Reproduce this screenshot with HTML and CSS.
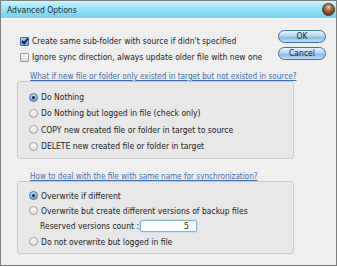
FILE: index.html
```html
<!DOCTYPE html>
<html lang="en">
<head>
    <meta charset="UTF-8">
    <title>Advanced Options</title>
    <link rel="stylesheet" href="styles.css">
</head>
<body>
<div class="window">
    <div class="title-bar">
        <span class="title">Advanced Options</span>
        <span class="close-button"></span>
    </div>

    <div class="content">
        <div class="top-row">
            <div class="top-options">
                <label class="row"><span class="checkbox checked"></span>Create same sub-folder with source if didn't specified</label>
                <label class="row"><span class="checkbox"></span>Ignore sync direction, always update older file with new one</label>
            </div>
            <div class="buttons">
                <button class="button">OK</button>
                <button class="button">Cancel</button>
            </div>
        </div>

        <div class="section-link first">What if new file or folder only existed in target but not existed in source?</div>
        <div class="group first-group">
            <label class="row radio-row"><span class="radio checked"></span>Do Nothing</label>
            <label class="row radio-row"><span class="radio"></span>Do Nothing but logged in file (check only)</label>
            <label class="row radio-row"><span class="radio"></span>COPY new created file or folder in target to source</label>
            <label class="row radio-row"><span class="radio"></span>DELETE new created file or folder in target</label>
        </div>

        <div class="section-link second">How to deal with the file with same name for synchronization?</div>
        <div class="group second-group">
            <label class="row radio-row"><span class="radio checked"></span>Overwrite if different</label>
            <label class="row radio-row"><span class="radio"></span>Overwrite but create different versions of backup files</label>
            <div class="row count-row">
                <span class="count-label">Reserved versions count :</span>
                <span class="count-input">5</span>
            </div>
            <label class="row radio-row"><span class="radio"></span>Do not overwrite but logged in file</label>
        </div>
    </div>
</div>
</body>
</html>
```

FILE: styles.css
```css
html, body {
    margin: 0;
    padding: 0;
    background: #ffffff;
}

.window {
    width: 335px;
    height: 264px;
    border: 1px solid #7d7d7d;
    background: repeating-linear-gradient(#f2f2f2 0, #f2f2f2 1px, #ececec 1px, #ececec 2px);
    font-family: "DejaVu Sans Condensed", "DejaVu Sans", sans-serif;
    font-size: 8.5px;
    color: #222;
    overflow: hidden;
}

.title-bar {
    height: 17px;
    display: flex;
    align-items: center;
    justify-content: space-between;
    padding: 0 1px 0 6px;
    background: linear-gradient(#cdf3fc, #93e3f6 50%, #6fd5ef);
    border-bottom: 1px solid #ffffff;
    position: relative;
}

.title-bar::after {
    content: "";
    position: absolute;
    left: 0;
    right: 16px;
    top: 13px;
    border-top: 1px dashed #7dcfea;
}

.title {
    color: #1e2a30;
    position: relative;
    z-index: 1;
}

.close-button {
    width: 11px;
    height: 11px;
    border-radius: 50%;
    border: 1px solid #4e3020;
    background: radial-gradient(circle at 50% 30%, #e9c9a6 0, #a86f44 35%, #6a3c20 75%);
    position: relative;
    z-index: 1;
}

.content {
    padding: 11px 10px 0 16px;
}

.top-row {
    display: flex;
    justify-content: space-between;
}

.top-options {
    padding: 3px 0 0 3px;
}

.row {
    display: flex;
    align-items: center;
    height: 16px;
    white-space: nowrap;
}

.checkbox {
    width: 7px;
    height: 7px;
    border: 1px solid #9a9a9a;
    border-radius: 1px;
    background: linear-gradient(#ffffff, #dcdcdc);
    margin-right: 3px;
    position: relative;
}

.checkbox.checked {
    border-color: #3c6ea8;
    background: linear-gradient(#b6d4f2, #6c9fd8);
}

.checkbox.checked::after {
    content: "";
    position: absolute;
    left: 2px;
    top: -1px;
    width: 2px;
    height: 5px;
    border: solid #0e2a55;
    border-width: 0 2px 2px 0;
    transform: rotate(40deg);
}

.buttons {
    display: flex;
    flex-direction: column;
    gap: 4px;
}

.button {
    width: 48px;
    height: 13px;
    padding: 0;
    border: 1px solid #3f6fa6;
    border-radius: 7px;
    background: linear-gradient(#e9f5ff, #a9d2f2 50%, #7fb8e6 55%, #bfe2fb);
    font-family: inherit;
    font-size: 8.5px;
    color: #1a1a1a;
    line-height: 11px;
}

.section-link {
    color: #3d6cae;
    text-decoration: underline;
    font-size: 8.1px;
    line-height: 9px;
    padding-left: 13px;
}

.section-link.first {
    margin-top: 7px;
}

.section-link.second {
    margin-top: 13px;
}

.group {
    border: 1px solid #cbcbcb;
    border-radius: 3px;
    background: #e8e8e8;
    padding-left: 11px;
    box-sizing: border-box;
    width: 277px;
}

.first-group {
    padding-top: 7px;
    padding-bottom: 4px;
}

.second-group {
    padding-top: 6px;
    padding-bottom: 4px;
}

.first-group .radio-row {
    height: 16.3px;
}

.second-group .row {
    height: 15px;
}

.second-group .count-row {
    height: 16px;
}

.radio {
    width: 7px;
    height: 7px;
    border-radius: 50%;
    border: 1px solid #9a9a9a;
    background: linear-gradient(#ffffff, #dedede);
    margin-right: 3px;
    position: relative;
}

.radio.checked {
    border-color: #3c6ea8;
    background: linear-gradient(#c4ddf6, #6c9fd8);
}

.radio.checked::after {
    content: "";
    position: absolute;
    left: 2px;
    top: 2px;
    width: 3px;
    height: 3px;
    border-radius: 50%;
    background: #0e1e35;
}

.count-label {
    padding-left: 11px;
    flex: none;
}

.count-input {
    margin-left: 1px;
    width: 48px;
    height: 10px;
    border: 1px solid #7fb0e0;
    box-shadow: 0 0 0 1px #c8e0f6;
    border-radius: 2px;
    background: #ffffff;
    text-align: right;
    padding-right: 7px;
    line-height: 10px;
}
```
